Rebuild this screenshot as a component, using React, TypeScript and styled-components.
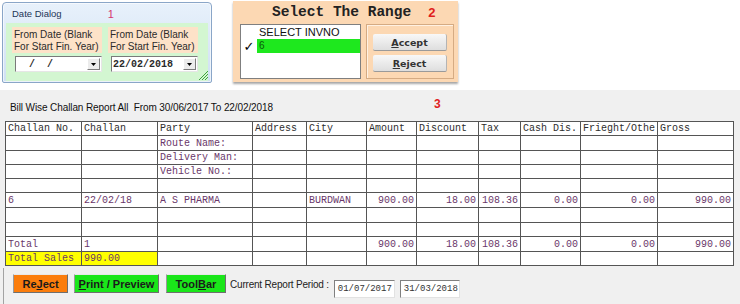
import styled, { createGlobalStyle } from "styled-components";

const mono = `"Liberation Mono", "Courier New", monospace`;
const sans = `"Liberation Sans", Arial, sans-serif`;

const GlobalStyle = createGlobalStyle`
  html, body {
    margin: 0;
    padding: 0;
    background: #ffffff;
  }
  body {
    width: 740px;
    height: 304px;
    overflow: hidden;
    font-family: ${sans};
  }
`;

type Col = { w: number; label: string; num?: boolean };

const columns: Col[] = [
  { w: 76, label: "Challan No." },
  { w: 76, label: "Challan" },
  { w: 95, label: "Party" },
  { w: 54, label: "Address" },
  { w: 60, label: "City" },
  { w: 50, label: "Amount", num: true },
  { w: 62, label: "Discount", num: true },
  { w: 42, label: "Tax", num: true },
  { w: 60, label: "Cash Dis.", num: true },
  { w: 77, label: "Frieght/Othe", num: true },
  { w: 76, label: "Gross", num: true },
];

const amounts = ["900.00", "18.00", "108.36", "0.00", "0.00", "990.00"];

const rows: { cells: string[]; yellow?: number }[] = [
  { cells: ["", "", "Route Name:"] },
  { cells: ["", "", "Delivery Man:"] },
  { cells: ["", "", "Vehicle No.:"] },
  { cells: [] },
  { cells: ["6", "22/02/18", "A S PHARMA", "", "BURDWAN", ...amounts] },
  { cells: [] },
  { cells: [] },
  { cells: ["Total", "1", "", "", "", ...amounts] },
  { cells: ["Total Sales", "990.00"], yellow: 2 },
];

const rowHeights = [14, 15, 14, 14, 14, 15, 15, 14, 15, 14];

const Page = styled.div`
  width: 740px;
  height: 304px;
  display: flex;
  flex-direction: column;
`;

const TopRow = styled.div`
  height: 90px;
  box-sizing: border-box;
  display: flex;
  align-items: flex-start;
  gap: 21px;
  padding: 1px 0 0 2px;
`;

const Marker = styled.span<{ $color: string; $size: number; $bold?: boolean }>`
  color: ${(p) => p.$color};
  font-family: ${sans};
  font-size: ${(p) => p.$size}px;
  font-weight: ${(p) => (p.$bold ? "bold" : "normal")};
  line-height: 1;
`;

/* ---------- 1: date dialog ---------- */

const DateDialog = styled.div`
  position: relative;
  margin-top: 1px;
  width: 210px;
  height: 81px;
  box-sizing: border-box;
  border: 1px solid #8aa6c8;
  border-radius: 4px 4px 2px 2px;
  background: linear-gradient(180deg, #e8f1fb 0%, #cfe0f3 100%);
  box-shadow: inset 0 0 0 1px rgba(255, 255, 255, 0.6);
  display: flex;
  flex-direction: column;
`;

const DialogTitle = styled.div`
  height: 20px;
  display: flex;
  align-items: center;
  padding-left: 9px;
  font-size: 9.5px;
  color: #1d3557;

  ${Marker} {
    margin-left: 46px;
    margin-top: 3px;
  }
`;

const DialogBody = styled.div`
  flex: 1;
  margin: 0 3px 1px 3px;
  background: #d3f6d1;
  display: flex;
  gap: 6px;
  padding: 4px 0 0 6px;
`;

const DateField = styled.div`
  width: 90px;
  display: flex;
  flex-direction: column;
`;

const FieldLabel = styled.div`
  height: 26px;
  box-sizing: border-box;
  background: #fde2c8;
  padding: 2px 1px 0 2px;
  font-size: 10px;
  line-height: 12px;
  color: #2b2b2b;
  white-space: nowrap;
`;

const Combo = styled.div`
  margin: 3px 0 0 3px;
  width: 87px;
  height: 16px;
  box-sizing: border-box;
  background: #ffffff;
  border: 1px solid;
  border-color: #7a7a7a #e6e6e6 #e6e6e6 #7a7a7a;
  display: flex;
  align-items: center;
`;

const ComboValue = styled.span`
  flex: 1;
  padding-left: 1px;
  font-family: ${mono};
  font-size: 10px;
  font-weight: bold;
  color: #2a2a2a;
  white-space: pre;
`;

const ComboButton = styled.div`
  width: 13px;
  height: 12px;
  margin-right: 1px;
  box-sizing: border-box;
  background: #ececec;
  border: 1px solid;
  border-color: #ffffff #7d7d7d #7d7d7d #ffffff;
  display: flex;
  align-items: center;
  justify-content: center;
`;

const Grip = styled.svg`
  position: absolute;
  right: 3px;
  bottom: 2px;
`;

/* ---------- 2: range selector ---------- */

const RangePanel = styled.div`
  width: 225px;
  height: 81px;
  box-sizing: border-box;
  background: #fcd8b3;
  box-shadow: 0 2px 2px rgba(0, 0, 0, 0.35);
  padding-left: 7px;
  display: flex;
  flex-direction: column;
`;

const RangeTitle = styled.div`
  height: 22px;
  display: flex;
  align-items: center;
  padding-left: 32px;
  font-family: ${mono};
  font-size: 14.5px;
  font-weight: bold;
  color: #222222;
  white-space: pre;

  ${Marker} {
    margin-left: 17px;
  }
`;

const RangeBody = styled.div`
  margin-top: 1px;
  display: flex;
  gap: 5px;
`;

const ListBox = styled.div`
  width: 121px;
  height: 55px;
  box-sizing: border-box;
  background: #ffffff;
  border: 1px solid #7f7f7f;
  padding-top: 2px;
`;

const ListHeader = styled.div`
  padding-left: 18px;
  font-size: 11px;
  line-height: 11px;
  color: #111111;
`;

const ListRow = styled.div`
  margin-top: 1px;
  height: 14px;
  display: flex;
  align-items: center;
`;

const Check = styled.span`
  width: 16px;
  text-align: center;
  font-family: "DejaVu Sans", sans-serif;
  font-size: 13px;
  font-weight: bold;
  color: #000000;
`;

const Selected = styled.span`
  flex: 1;
  height: 14px;
  line-height: 14px;
  background: #1ee81e;
  color: #0b5a0b;
  font-size: 10px;
  padding-left: 2px;
`;

const ActionBox = styled.div`
  width: 88px;
  height: 55px;
  box-sizing: border-box;
  border: 1px solid #d5ab83;
  box-shadow: inset 1px 1px 0 #fff1e2;
  padding: 9px 0 0 6px;
  display: flex;
  flex-direction: column;
  gap: 4px;
`;

const ActionButton = styled.button`
  width: 74px;
  height: 17px;
  padding: 0;
  border: none;
  border-bottom: 1px solid #9a9a9a;
  border-right: 1px solid #b4b4b4;
  border-radius: 2px;
  background: linear-gradient(180deg, #f8f8f8 0%, #dedede 100%);
  font-family: "DejaVu Sans", sans-serif;
  font-size: 9.5px;
  font-weight: bold;
  color: #333333;
`;

/* ---------- 3: report ---------- */

const Report = styled.div`
  flex: 1;
  background: #f0f0f0;
  padding-left: 5px;
  display: flex;
  flex-direction: column;
`;

const ReportHeader = styled.div`
  height: 31px;
  box-sizing: border-box;
  display: grid;
  grid-template-columns: 424px auto;
  align-items: end;
  padding: 0 0 7px 5px;

  ${Marker} {
    margin-bottom: 4px;
  }
`;

const ReportTitle = styled.span`
  font-size: 10px;
  letter-spacing: -0.1px;
  line-height: 12px;
  color: #111111;
  white-space: pre;
`;

const Grid = styled.div`
  display: grid;
  grid-template-columns: ${columns.map((c) => `${c.w}px`).join(" ")};
  grid-template-rows: ${rowHeights.map((h) => `${h}px`).join(" ")};
  width: max-content;
  border-top: 1px solid #555555;
  border-left: 1px solid #555555;
  background: #ffffff;
`;

const Cell = styled.div<{ $num?: boolean; $head?: boolean; $yellow?: boolean }>`
  box-sizing: border-box;
  border-right: 1px solid #555555;
  border-bottom: 1px solid #555555;
  padding: 0 2px;
  display: flex;
  align-items: center;
  justify-content: ${(p) => (p.$num ? "flex-end" : "flex-start")};
  overflow: hidden;
  white-space: pre;
  font-family: ${mono};
  font-size: 10px;
  color: ${(p) => (p.$head ? "#2e2e2e" : "#6a376a")};
  background: ${(p) => (p.$yellow ? "#ffff00" : "transparent")};
`;

const BottomBar = styled.div`
  flex: 1;
  margin: 2px 0 0 -2px;
  border-left: 1px solid #a3a3a3;
  padding: 6px 0 0 9px;
  display: flex;
  align-items: flex-start;
`;

const BarButton = styled.button<{ $bg: string; $w: number; $gap: number }>`
  width: ${(p) => p.$w}px;
  height: 19px;
  margin-right: ${(p) => p.$gap}px;
  padding: 0;
  box-sizing: border-box;
  background: ${(p) => p.$bg};
  border: 1px solid;
  border-color: #e8e8e8 #6f6f6f #6f6f6f #9a9a9a;
  font-family: ${sans};
  font-size: 11px;
  font-weight: bold;
  color: #1a1a1a;
`;

const PeriodLabel = styled.span`
  margin: 5px 5px 0 0;
  font-size: 10px;
  letter-spacing: -0.2px;
  color: #222222;
`;

const DateBox = styled.div<{ $w: number }>`
  margin: 6px 5px 0 0;
  width: ${(p) => p.$w}px;
  height: 18px;
  box-sizing: border-box;
  background: #ffffff;
  border: 1px solid;
  border-color: #808080 #e2e2e2 #e2e2e2 #808080;
  padding-left: 3px;
  display: flex;
  align-items: center;
  font-family: ${mono};
  font-size: 9px;
  color: #333333;
`;

const Caret = () => (
  <svg width="5" height="3" viewBox="0 0 5 3">
    <polygon points="0,0 5,0 2.5,3" fill="#000" />
  </svg>
);

export default function App() {
  return (
    <Page>
      <GlobalStyle />
      <TopRow>
        <DateDialog>
          <DialogTitle>
            Date Dialog
            <Marker $color="#d6376f" $size={11}>1</Marker>
          </DialogTitle>
          <DialogBody>
            <DateField>
              <FieldLabel>
                From Date (Blank
                <br />
                For Start Fin. Year)
              </FieldLabel>
              <Combo>
                <ComboValue>{"  /  /"}</ComboValue>
                <ComboButton>
                  <Caret />
                </ComboButton>
              </Combo>
            </DateField>
            <DateField>
              <FieldLabel>
                From Date (Blank
                <br />
                For Start Fin. Year)
              </FieldLabel>
              <Combo>
                <ComboValue>22/02/2018</ComboValue>
                <ComboButton>
                  <Caret />
                </ComboButton>
              </Combo>
            </DateField>
          </DialogBody>
          <Grip width="10" height="10" viewBox="0 0 10 10">
            <g stroke="#3da33d" strokeWidth="1">
              <line x1="10" y1="1" x2="1" y2="10" />
              <line x1="10" y1="4" x2="4" y2="10" />
              <line x1="10" y1="7" x2="7" y2="10" />
            </g>
          </Grip>
        </DateDialog>

        <RangePanel>
          <RangeTitle>
            Select The Range
            <Marker $color="#e0201c" $size={13} $bold>2</Marker>
          </RangeTitle>
          <RangeBody>
            <ListBox>
              <ListHeader>SELECT INVNO</ListHeader>
              <ListRow>
                <Check>✓</Check>
                <Selected>6</Selected>
              </ListRow>
            </ListBox>
            <ActionBox>
              <ActionButton>
                <u>A</u>ccept
              </ActionButton>
              <ActionButton>
                <u>R</u>eject
              </ActionButton>
            </ActionBox>
          </RangeBody>
        </RangePanel>
      </TopRow>

      <Report>
        <ReportHeader>
          <ReportTitle>Bill Wise Challan Report All  From 30/06/2017 To 22/02/2018</ReportTitle>
          <Marker $color="#e0201c" $size={12} $bold>3</Marker>
        </ReportHeader>

        <Grid>
          {columns.map((c) => (
            <Cell key={c.label} $head>
              {c.label}
            </Cell>
          ))}
          {rows.map((r, ri) =>
            columns.map((c, ci) => (
              <Cell
                key={`${ri}-${ci}`}
                $num={c.num}
                $yellow={r.yellow !== undefined && ci < r.yellow}
              >
                {r.cells[ci] ?? ""}
              </Cell>
            ))
          )}
        </Grid>

        <BottomBar>
          <BarButton $bg="#fb7d0c" $w={55} $gap={6}>
            Re<u>J</u>ect
          </BarButton>
          <BarButton $bg="#1ae61a" $w={85} $gap={7}>
            <u>P</u>rint / Preview
          </BarButton>
          <BarButton $bg="#1ae61a" $w={60} $gap={4}>
            Tool<u>B</u>ar
          </BarButton>
          <PeriodLabel>Current Report Period :</PeriodLabel>
          <DateBox $w={61}>01/07/2017</DateBox>
          <DateBox $w={60}>31/03/2018</DateBox>
        </BottomBar>
      </Report>
    </Page>
  );
}
